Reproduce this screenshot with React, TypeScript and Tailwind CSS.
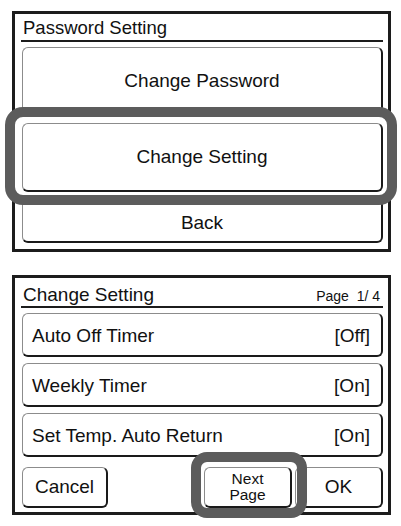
import React from "react";

const font = { fontFamily: '"Liberation Sans", Arial, sans-serif' };

const btn =
  "rounded-[6px] border border-[#8c8c8c] border-r-2 border-b-2 border-r-[#1a1a1a] border-b-[#1a1a1a] bg-white";

function MenuButton({ label, h }: { label: string; h: string }) {
  return (
    <div className={`${btn} ${h} flex items-center justify-center text-[19px] text-[#111]`}>
      {label}
    </div>
  );
}

function SettingRow({ label, value }: { label: string; value: string }) {
  return (
    <div
      className={`${btn} h-[44px] flex items-center justify-between pl-[9px] pr-[11px] pt-[3px] text-[19px] text-[#111]`}
    >
      <span>{label}</span>
      <span>{value}</span>
    </div>
  );
}

export default function App() {
  return (
    <div
      className="relative w-[401px] h-[526px] bg-white pt-[11px] pl-[12px] overflow-hidden"
      style={font}
    >
      {/* Password Setting screen */}
      <div className="w-[379px] h-[241px] border-[3px] border-[#1c1c1c] pl-[7px] pr-[5px] flex flex-col">
        <div className="h-[28px] -ml-px border-b-2 border-[#1c1c1c] flex items-end pb-[3px] pl-[2px] text-[18.5px] leading-none text-[#111]">
          Password Setting
        </div>
        <div className="mt-[5px] flex flex-col gap-[7px]">
          <MenuButton label="Change Password" h="h-[69px]" />
          <MenuButton label="Change Setting" h="h-[69px]" />
          <MenuButton label="Back" h="h-[44px] pt-[5px]" />
        </div>
      </div>

      {/* Change Setting screen */}
      <div className="mt-[23px] w-[379px] h-[240px] border-[3px] border-[#1c1c1c] pl-[7px] pr-[5px] flex flex-col">
        <div className="h-[30px] -ml-px border-b-2 border-[#1c1c1c] flex items-end justify-between pb-[2px] pl-[2px] pr-[3px] leading-none text-[#111]">
          <span className="text-[19px]">Change Setting</span>
          <span className="text-[14px] whitespace-pre pb-px">Page  1/ 4</span>
        </div>
        <div className="mt-[5px] flex flex-col gap-[6px]">
          <SettingRow label="Auto Off Timer" value="[Off]" />
          <SettingRow label="Weekly Timer" value="[On]" />
          <SettingRow label="Set Temp. Auto Return" value="[On]" />
        </div>
        <div className="mt-[10px] flex justify-between">
          <div className={`${btn} w-[86px] h-[41px] flex items-center justify-center pt-px text-[19px] text-[#111]`}>
            Cancel
          </div>
          <div className="flex gap-[3px]">
            <div
              className={`${btn} w-[88px] h-[41px] flex flex-col items-center justify-center text-[15.5px] leading-[16px] text-[#111]`}
            >
              <span>Next</span>
              <span>Page</span>
            </div>
            <div className={`${btn} w-[88px] h-[41px] flex items-center justify-center pt-px text-[19px] text-[#111]`}>
              OK
            </div>
          </div>
        </div>
      </div>

      {/* selection highlights */}
      <div className="absolute left-[5px] top-[107px] w-[392px] h-[98px] rounded-[18px] border-[10px] border-[#5c5c5c] pointer-events-none" />
      <div className="absolute left-[191px] top-[452px] w-[116px] h-[66px] rounded-[16px] border-[10px] border-[#5c5c5c] pointer-events-none" />
    </div>
  );
}
